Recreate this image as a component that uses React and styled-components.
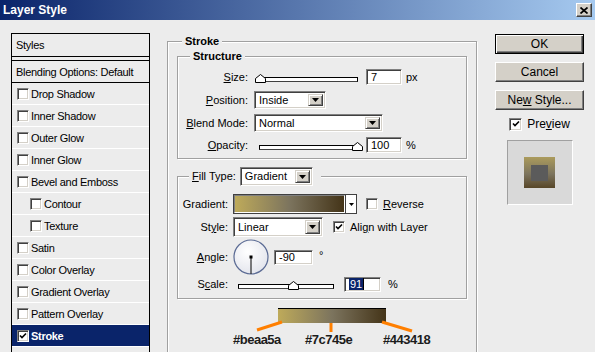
import React from 'react';
import styled, { createGlobalStyle } from 'styled-components';

const GlobalStyle = createGlobalStyle`
  html, body {
    margin: 0;
    padding: 0;
    background: #ececec;
  }
  body {
    font-family: 'Liberation Sans', Arial, sans-serif;
    font-size: 11px;
    color: #000;
  }
  * {
    box-sizing: border-box;
  }
`;

const Window = styled.div`
  width: 595px;
  height: 352px;
  overflow: hidden;
  background: #ececec;
  display: flex;
  flex-direction: column;
`;

const TitleBar = styled.div`
  flex: none;
  height: 20px;
  display: flex;
  align-items: center;
  justify-content: space-between;
  padding: 0 3px 0 3px;
  background: linear-gradient(90deg, #0a246a 0%, #a6caf0 100%);
  color: #fff;
  font-weight: bold;
  font-size: 12px;
`;

const CloseButton = styled.div`
  width: 16px;
  height: 14px;
  background: #d4d0c8;
  border: 1px solid;
  border-color: #fff #404040 #404040 #fff;
  box-shadow: inset -1px -1px 0 #808080;
  display: flex;
  align-items: center;
  justify-content: center;
`;

const Body = styled.div`
  flex: 1;
  display: flex;
  align-items: flex-start;
`;

/* ---------- left style list ---------- */

const StyleList = styled.div`
  flex: none;
  width: 139px;
  height: 340px;
  margin: 13px 0 0 11px;
  border: 1px solid #000;
  letter-spacing: -0.3px;
`;

const ListHeader = styled.div`
  height: 23px;
  padding-left: 4px;
  display: flex;
  align-items: center;
  border-bottom: 1px solid #000;
`;

const BlendingRow = styled.div`
  height: 23px;
  margin-top: 3px;
  padding-left: 4px;
  display: flex;
  align-items: center;
  border-top: 1px solid #000;
  border-bottom: 1px solid #000;
`;

const ListItem = styled.div`
  height: 22px;
  display: flex;
  align-items: center;
  gap: 2px;
  padding-left: ${(p) => (p.$indent ? 18 : 5)}px;
  border-bottom: 1px solid #fff;
  background: ${(p) => (p.$selected ? '#0a246a' : 'transparent')};
  color: ${(p) => (p.$selected ? '#fff' : '#000')};
  font-weight: ${(p) => (p.$selected ? 'bold' : 'normal')};
`;

const Box = styled.span`
  flex: none;
  width: ${(p) => p.$size}px;
  height: ${(p) => p.$size}px;
  background: #fff;
  border: 1px solid;
  border-color: #808080 #fff #fff #808080;
  box-shadow: inset 1px 1px 0 #404040, inset -1px -1px 0 #d4d0c8;
  display: flex;
  align-items: center;
  justify-content: center;
`;

const Checkbox = ({ checked, size = 12 }) => (
  <Box $size={size}>
    {checked && (
      <svg width="8" height="8" viewBox="0 0 8 8">
        <path d="M1 3.5 L3 5.6 L7 1.5" fill="none" stroke="#000" strokeWidth="1.6" />
      </svg>
    )}
  </Box>
);

/* ---------- main panel ---------- */

const Main = styled.div`
  flex: none;
  width: 310px;
  margin: 15px 0 0 17px;
`;

const Group = styled.fieldset`
  margin: ${(p) => p.$mt || 0}px 0 0 0;
  padding: ${(p) => p.$pad};
  min-width: 0;
  height: ${(p) => (p.$h ? `${p.$h}px` : 'auto')};
  border: 1px solid #a0a0a0;
  box-shadow: 1px 1px 0 #fff, inset 1px 1px 0 #fff;
`;

const Legend = styled.legend`
  margin-left: ${(p) => p.$offset}px;
  padding: 0 ${(p) => p.$pr || 3}px 0 3px;
  line-height: 13px;
  font-weight: ${(p) => (p.$plain ? 'normal' : 'bold')};
  background: #ececec;
  display: flex;
  align-items: center;
`;

const FormGrid = styled.div`
  display: grid;
  grid-template-columns: ${(p) => p.$label}px 1fr;
  grid-template-rows: ${(p) => p.$rows};
  column-gap: ${(p) => p.$gap}px;
  align-items: center;
`;

const Label = styled.div`
  text-align: right;
  white-space: nowrap;
`;

const Controls = styled.div`
  display: flex;
  align-items: center;
`;

const Field = styled.div`
  flex: none;
  width: ${(p) => p.$w}px;
  height: ${(p) => p.$h || 16}px;
  margin-left: ${(p) => p.$ml || 0}px;
  padding-left: 4px;
  background: #fff;
  border: 1px solid;
  border-color: #808080 #fff #fff #808080;
  box-shadow: inset 1px 1px 0 #404040, inset -1px -1px 0 #d4d0c8;
  display: flex;
  align-items: center;
`;

const Selected = styled.span`
  background: #0a246a;
  color: #fff;
  padding: 0 1px;
  line-height: 12px;
`;

const Caret = styled.span`
  width: 1px;
  height: 12px;
  background: #000;
`;

const Unit = styled.span`
  margin-left: ${(p) => p.$ml}px;
  align-self: ${(p) => (p.$top ? 'flex-start' : 'center')};
  margin-top: ${(p) => (p.$top ? 10 : 0)}px;
`;

const SelectBox = styled.div`
  flex: none;
  width: ${(p) => p.$w}px;
  height: ${(p) => p.$h}px;
  margin-left: ${(p) => p.$ml || 0}px;
  padding: 2px;
  background: #fff;
  border: 1px solid;
  border-color: #808080 #fff #fff #808080;
  box-shadow: inset 1px 1px 0 #404040, inset -1px -1px 0 #d4d0c8;
  display: flex;
  align-items: stretch;
`;

const SelectText = styled.span`
  flex: 1;
  padding-left: 2px;
  display: flex;
  align-items: center;
`;

const DropButton = styled.span`
  flex: none;
  width: 15px;
  background: #d4d0c8;
  border: 1px solid;
  border-color: #d4d0c8 #404040 #404040 #d4d0c8;
  box-shadow: inset 1px 1px 0 #fff, inset -1px -1px 0 #808080;
  display: flex;
  align-items: center;
  justify-content: center;
`;

const Triangle = ({ w = 7, h = 4 }) => (
  <svg width={w} height={h} viewBox={`0 0 ${w} ${h}`}>
    <polygon points={`0,0 ${w},0 ${w / 2},${h}`} fill="#000" />
  </svg>
);

const Select = ({ value, w, h = 18, ml }) => (
  <SelectBox $w={w} $h={h} $ml={ml}>
    <SelectText>{value}</SelectText>
    <DropButton>
      <Triangle />
    </DropButton>
  </SelectBox>
);

const SliderWrap = styled.div`
  position: relative;
  flex: none;
  width: ${(p) => p.$w}px;
  height: 12px;
  margin-left: ${(p) => p.$ml}px;
  display: flex;
  flex-direction: column;
  justify-content: flex-end;
  padding-bottom: 1px;
`;

const Track = styled.div`
  height: 5px;
  border: 1px solid #000;
  border-bottom-color: #404040;
  background: #fff;
`;

const Thumb = styled.svg`
  position: absolute;
  bottom: 0;
`;

const Slider = ({ w, ml, pos }) => (
  <SliderWrap $w={w} $ml={ml}>
    <Track />
    <Thumb width="11" height="9" viewBox="0 0 11 9" style={{ left: `calc(${pos * 100}% - 5.5px)` }}>
      <path d="M0.5 8.5 V4.5 L5.5 0.5 L10.5 4.5 V8.5 Z" fill="#fff" stroke="#000" />
    </Thumb>
  </SliderWrap>
);

const GradientField = styled.div`
  flex: none;
  width: 124px;
  height: 20px;
  border: 1px solid #404040;
  display: flex;
`;

const GradientSwatch = styled.div`
  flex: 1;
  border: 1px solid #fff;
  border-color: #808080 #fff #fff #808080;
  background: linear-gradient(90deg, #beaa5a 0%, #7c745e 50%, #443418 100%);
`;

const GradientArrow = styled.span`
  flex: none;
  width: 11px;
  background: #fff;
  border-left: 1px solid #404040;
  display: flex;
  align-items: center;
  justify-content: center;
`;

const CheckLabel = styled.span`
  margin-left: 5px;
  white-space: nowrap;
`;

const CheckWrap = styled.span`
  margin-left: ${(p) => p.$ml}px;
  display: flex;
  align-items: center;
`;

/* ---------- colour annotation ---------- */

const Annotation = styled.div`
  position: relative;
  height: 44px;
  margin-top: 9px;
`;

const GradientBar = styled.div`
  width: 108px;
  height: 15px;
  margin-left: 101px;
  border-top: 1px solid #000;
  background: linear-gradient(90deg, #beaa5a 0%, #7c745e 50%, #443418 100%);
`;

const ColorLabels = styled.div`
  display: grid;
  grid-template-columns: 72px 78px auto;
  margin-top: 10px;
  padding-left: 56px;
  font-size: 13px;
  font-weight: bold;
  letter-spacing: -0.5px;
  color: #1c1c1c;
  line-height: 13px;
`;

const Pointers = styled.svg`
  position: absolute;
  top: 0;
  left: 0;
  pointer-events: none;
`;

/* ---------- right column ---------- */

const Side = styled.div`
  flex: none;
  width: 89px;
  margin: 14px 0 0 18px;
  display: flex;
  flex-direction: column;
  align-items: center;
`;

const Button = styled.div`
  width: 89px;
  height: 20px;
  margin-top: ${(p) => p.$mt || 0}px;
  display: flex;
  align-items: center;
  justify-content: center;
  background: #d4d0c8;
  font-size: 12px;
  border: 1px solid;
  border-color: ${(p) => (p.$default ? '#000' : '#fff #404040 #404040 #fff')};
  box-shadow: ${(p) =>
    p.$default
      ? 'inset 1px 1px 0 #fff, inset -1px -1px 0 #404040, inset -2px -2px 0 #808080'
      : 'inset -1px -1px 0 #808080'};
`;

const PreviewToggle = styled.div`
  margin-top: 7px;
  display: flex;
  align-items: center;
  font-size: 12px;
`;

const PreviewBox = styled.div`
  width: 66px;
  height: 65px;
  margin-top: 9px;
  background: #d9d9d9;
  border: 1px solid;
  border-color: #a0a0a0 #fff #fff #a0a0a0;
  display: flex;
  align-items: center;
  justify-content: center;
`;

const PreviewStroke = styled.div`
  width: 31px;
  height: 31px;
  background: linear-gradient(180deg, #ab9b5c 0%, #7c745e 55%, #574628 100%);
  display: flex;
  align-items: center;
  justify-content: center;
`;

const PreviewFill = styled.div`
  width: 17px;
  height: 16px;
  background: #5b5b5b;
`;

const styleItems = [
  { name: 'Drop Shadow' },
  { name: 'Inner Shadow' },
  { name: 'Outer Glow' },
  { name: 'Inner Glow' },
  { name: 'Bevel and Emboss' },
  { name: 'Contour', indent: true },
  { name: 'Texture', indent: true },
  { name: 'Satin' },
  { name: 'Color Overlay' },
  { name: 'Gradient Overlay' },
  { name: 'Pattern Overlay' },
  { name: 'Stroke', checked: true, selected: true },
];

const AngleDial = () => (
  <svg width="36" height="36" viewBox="0 0 36 36">
    <defs>
      <radialGradient id="dialFill" cx="40%" cy="35%" r="70%">
        <stop offset="0" stopColor="#ffffff" />
        <stop offset="1" stopColor="#e2e4ec" />
      </radialGradient>
    </defs>
    <circle cx="18" cy="18" r="17" fill="url(#dialFill)" stroke="#5b6b94" strokeWidth="1.2" />
    <line x1="18" y1="18" x2="18" y2="35" stroke="#000" strokeWidth="1" />
    <rect x="16.5" y="16.5" width="3" height="3" fill="#000" />
  </svg>
);

const App = () => {
  const size = 7;
  const opacity = 100;
  const scale = 91;

  return (
    <Window>
      <GlobalStyle />
      <TitleBar>
        <span>Layer Style</span>
        <CloseButton>
          <svg width="8" height="7" viewBox="0 0 8 7">
            <path d="M0.5 0.5 L7.5 6.5 M7.5 0.5 L0.5 6.5" stroke="#000" strokeWidth="1.7" />
          </svg>
        </CloseButton>
      </TitleBar>

      <Body>
        <StyleList>
          <ListHeader>Styles</ListHeader>
          <BlendingRow>Blending Options: Default</BlendingRow>
          {styleItems.map((item) => (
            <ListItem key={item.name} $indent={item.indent} $selected={item.selected}>
              <Checkbox checked={item.checked} />
              <span>{item.name}</span>
            </ListItem>
          ))}
        </StyleList>

        <Main>
          <Group $pad="0 9px" $h={330}>
            <Legend $offset={5}>Stroke</Legend>

            <Group $mt={2} $pad="3px 0 2px 0">
              <Legend $offset={12}>Structure</Legend>
              <FormGrid $label={70} $gap={6} $rows="22px 23px 23px 22px">
                <Label><u>S</u>ize:</Label>
                <Controls>
                  <Slider w={100} ml={4} pos={size / 250} />
                  <Field $w={36} $ml={8}>{size}</Field>
                  <Unit $ml={4}>px</Unit>
                </Controls>

                <Label><u>P</u>osition:</Label>
                <Controls>
                  <Select value="Inside" w={72} />
                </Controls>

                <Label><u>B</u>lend Mode:</Label>
                <Controls>
                  <Select value="Normal" w={129} />
                </Controls>

                <Label><u>O</u>pacity:</Label>
                <Controls>
                  <Slider w={98} ml={5} pos={opacity / 100} />
                  <Field $w={36} $ml={9}>{opacity}</Field>
                  <Unit $ml={4}>%</Unit>
                </Controls>
              </FormGrid>
            </Group>

            <Group $mt={8} $pad="7px 0 5px 0">
              <Legend $offset={11} $pr={8} $plain>
                <span><u>F</u>ill Type:</span>
                <Select value="Gradient" w={73} h={19} ml={4} />
              </Legend>
              <FormGrid $label={50} $gap={5} $rows="22px 24px 36px 18px">
                <Label>Gradient:</Label>
                <Controls>
                  <GradientField>
                    <GradientSwatch />
                    <GradientArrow>
                      <Triangle w={5} h={3} />
                    </GradientArrow>
                  </GradientField>
                  <CheckWrap $ml={9}>
                    <Checkbox size={12} />
                    <CheckLabel><u>R</u>everse</CheckLabel>
                  </CheckWrap>
                </Controls>

                <Label>St<u>y</u>le:</Label>
                <Controls>
                  <Select value="Linear" w={90} h={20} />
                  <CheckWrap $ml={10}>
                    <Checkbox size={12} checked />
                    <CheckLabel>Ali<u>g</u>n with Layer</CheckLabel>
                  </CheckWrap>
                </Controls>

                <Label><u>A</u>ngle:</Label>
                <Controls>
                  <AngleDial />
                  <Field $w={39} $h={15} $ml={5}>-90</Field>
                  <Unit $ml={6} $top>°</Unit>
                </Controls>

                <Label>S<u>c</u>ale:</Label>
                <Controls>
                  <Slider w={96} ml={5} pos={(scale - 10) / 140} />
                  <Field $w={37} $h={15} $ml={10}>
                    <Selected>{scale}</Selected>
                    <Caret />
                  </Field>
                  <Unit $ml={7}>%</Unit>
                </Controls>
              </FormGrid>
            </Group>

            <Annotation>
              <GradientBar />
              <ColorLabels>
                <span>#beaa5a</span>
                <span>#7c745e</span>
                <span>#443418</span>
              </ColorLabels>
              <Pointers width="290" height="44" viewBox="0 0 290 44">
                <g stroke="#ff7f00" strokeWidth="3" strokeLinecap="butt">
                  <line x1="80" y1="22" x2="105" y2="14" />
                  <line x1="154" y1="15" x2="154" y2="24" />
                  <line x1="205" y1="14" x2="235" y2="23" />
                </g>
              </Pointers>
            </Annotation>
          </Group>
        </Main>

        <Side>
          <Button $default>OK</Button>
          <Button $mt={8}>Cancel</Button>
          <Button $mt={8}>Ne<u>w</u>&nbsp;Style...</Button>
          <PreviewToggle>
            <Checkbox size={13} checked />
            <CheckLabel>Pre<u>v</u>iew</CheckLabel>
          </PreviewToggle>
          <PreviewBox>
            <PreviewStroke>
              <PreviewFill />
            </PreviewStroke>
          </PreviewBox>
        </Side>
      </Body>
    </Window>
  );
};

export default App;
